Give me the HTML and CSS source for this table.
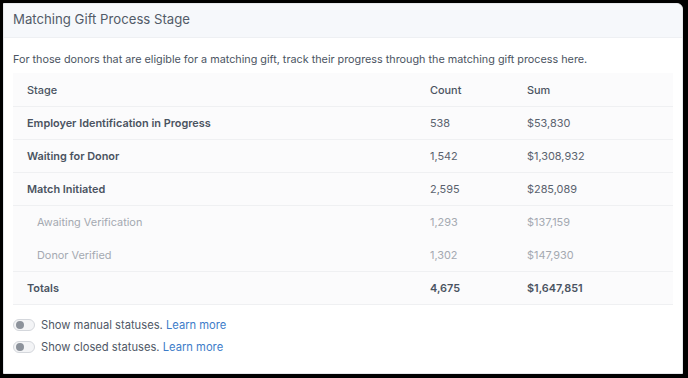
FILE: index.html
```html
<!DOCTYPE html>
<html>
<head>
<meta charset="utf-8">
<link rel="stylesheet" href="styles.css">
</head>
<body>
<div class="card">
  <div class="card-header">Matching Gift Process Stage</div>
  <div class="card-body">
    <p class="desc">For those donors that are eligible for a matching gift, track their progress through the matching gift process here.</p>
    <table class="stages">
      <thead>
        <tr><th class="c-stage">Stage</th><th class="c-count">Count</th><th class="c-sum">Sum</th></tr>
      </thead>
      <tbody>
        <tr class="main"><td class="c-stage">Employer Identification in Progress</td><td>538</td><td>$53,830</td></tr>
        <tr class="main"><td class="c-stage">Waiting for Donor</td><td>1,542</td><td>$1,308,932</td></tr>
        <tr class="main"><td class="c-stage">Match Initiated</td><td>2,595</td><td>$285,089</td></tr>
        <tr class="sub"><td class="c-stage">Awaiting Verification</td><td>1,293</td><td>$137,159</td></tr>
        <tr class="sub last-sub"><td class="c-stage">Donor Verified</td><td>1,302</td><td>$147,930</td></tr>
        <tr class="total"><td class="c-stage">Totals</td><td>4,675</td><td>$1,647,851</td></tr>
      </tbody>
    </table>
    <div class="toggles">
      <label class="toggle-row"><span class="switch"><span class="knob"></span></span>Show manual statuses.&nbsp;<a href="#">Learn more</a></label>
      <label class="toggle-row"><span class="switch"><span class="knob"></span></span>Show closed statuses.&nbsp;<a href="#">Learn more</a></label>
    </div>
  </div>
</div>
</body>
</html>
```
FILE: styles.css
```css
html, body {
  margin: 0;
  padding: 0;
  background: #000;
  height: 100%;
}
body {
  padding: 3px 5px 4px 3px;
  box-sizing: border-box;
  font-family: Inter, "Noto Sans", sans-serif;
}
.card {
  background: #fff;
  height: 100%;
  box-sizing: border-box;
  border: 1px solid #e6e8ec;
  border-radius: 0 6px 0 0;
  overflow: hidden;
}
.card-header {
  background: #f6f8fb;
  height: 33px;
  line-height: 31px;
  padding-left: 9px;
  font-size: 13.2px;
  color: #525b68;
  border-bottom: 1px solid #eef0f3;
}
.card-body {
  padding: 0 9px 0 9px;
}
.desc {
  margin: 0;
  padding-top: 12px;
  height: 19px;
  line-height: 19px;
  font-size: 10.8px;
  color: #4b5462;
}
.stages {
  margin-top: 4px;
  width: 100%;
  border-collapse: collapse;
  background: #fbfbfc;
  font-size: 10.9px;
}
.stages th, .stages td {
  height: 32px;
  padding: 0;
  text-align: left;
  border-bottom: 1px solid #eff0f2;
}
.stages th {
  height: 33px;
  font-weight: 500;
  color: #4a5361;
}
.c-stage {
  padding-left: 14px !important;
  width: 393px;
}
.c-count { width: 97px; }
.stages td { color: #5a626e; }
.main .c-stage { font-weight: 600; color: #4a5361; }
.sub td { color: #a4a9b1; }
.sub .c-stage { padding-left: 24px !important; }
.sub td { border-bottom-color: transparent; }
.last-sub td { border-bottom: 1px solid #eff0f2; }
.total td { font-weight: 600; color: #4a5361; }
.toggles {
  margin-top: 12px;
  display: flex;
  flex-direction: column;
  gap: 6px;
}
.toggle-row {
  display: flex;
  align-items: center;
  font-size: 11.2px;
  color: #4f5866;
  height: 16px;
}
.switch {
  position: relative;
  width: 20px;
  height: 10px;
  border: 1px solid #d4d7dc;
  border-radius: 7px;
  background: #f3f4f6;
  margin-right: 6px;
  box-sizing: content-box;
}
.knob {
  position: absolute;
  left: 2px;
  top: 1px;
  width: 8px;
  height: 8px;
  border-radius: 50%;
  background: #8c929b;
}
.toggle-row a {
  color: #3d7cc9;
  text-decoration: none;
}
```
